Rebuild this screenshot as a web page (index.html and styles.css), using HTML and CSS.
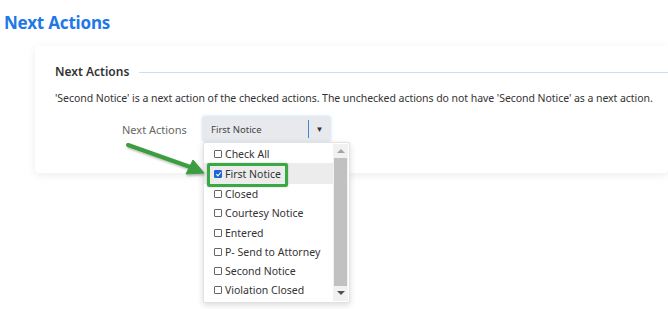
FILE: index.html
```html
<!DOCTYPE html>
<html lang="en">
<head>
    <meta charset="UTF-8">
    <title>Next Actions</title>
    <link rel="stylesheet" href="styles.css">
</head>
<body>
    <h1 class="page-title">Next Actions</h1>

    <div class="card">
        <div class="legend">
            <span>Next Actions</span>
            <div class="legend-line"></div>
        </div>
        <p class="note">'Second Notice' is a next action of the checked actions. The unchecked actions do not have 'Second Notice' as a next action.</p>

        <div class="field">
            <label class="field-label">Next Actions</label>
            <div class="select-wrap">
                <div class="select">
                    <span class="select-text">First Notice</span>
                    <span class="select-arrow">&#9660;</span>
                </div>
                <div class="dropdown">
                    <ul class="options">
                        <li><span class="box"></span>Check All</li>
                        <li class="hover"><span class="box checked"></span>First Notice</li>
                        <li><span class="box"></span>Closed</li>
                        <li><span class="box"></span>Courtesy Notice</li>
                        <li><span class="box"></span>Entered</li>
                        <li><span class="box"></span>P- Send to Attorney</li>
                        <li><span class="box"></span>Second Notice</li>
                        <li><span class="box"></span>Violation Closed</li>
                    </ul>
                    <div class="scrollbar">
                        <span class="sb-up"></span>
                        <span class="sb-thumb"></span>
                        <span class="sb-down"></span>
                    </div>
                    <div class="highlight"></div>
                </div>
            </div>
        </div>
    </div>

    <!-- annotation arrow -->
    <svg class="arrow" width="90" height="40" viewBox="0 0 90 40">
        <defs>
            <filter id="sh" x="-20%" y="-50%" width="140%" height="200%">
                <feDropShadow dx="1" dy="1.5" stdDeviation="1" flood-color="#000" flood-opacity="0.3"/>
            </filter>
        </defs>
        <g filter="url(#sh)" fill="#3a9d3f" stroke="#3a9d3f">
            <line x1="3" y1="4" x2="68" y2="27" stroke-width="4" stroke-linecap="round"/>
            <polygon points="79,32 61,33 68,19" stroke-width="1" stroke-linejoin="round"/>
        </g>
    </svg>
</body>
</html>
```

FILE: styles.css
```css
* {
  box-sizing: border-box;
}

body {
  margin: 0;
  background-color: #fff;
  font-family: "Noto Sans", "Open Sans", sans-serif;
  color: #333;
  position: relative;
  height: 309px;
  overflow: hidden;
}

.page-title {
  margin: 0;
  padding: 10px 4px 0;
  font-size: 17px;
  font-weight: bold;
  color: #1e78e8;
  line-height: 26px;
  letter-spacing: -0.2px;
}

.card {
  margin: 10px 0 0 35px;
  padding: 16px 0 20px 20px;
  background: #fff;
  border-radius: 4px;
  box-shadow: 0 2px 10px rgba(0, 0, 0, 0.08);
  height: 127px;
}

.legend {
  display: flex;
  align-items: center;
  gap: 10px;
  font-size: 12px;
  font-weight: 600;
  color: #333;
  line-height: 20px;
}

.legend-line {
  flex: 1;
  height: 1px;
  background: #cddff5;
}

.note {
  margin: 8px 0 0;
  font-size: 10.5px;
  line-height: 16px;
  color: #333;
  letter-spacing: -0.05px;
}

.field {
  display: flex;
  align-items: center;
  margin-top: 11px;
}

.field-label {
  flex-shrink: 0;
  width: 148px;
  padding-left: 67px;
  font-size: 11px;
  color: #666;
  white-space: nowrap;
}

.select-wrap {
  position: relative;
}

.select {
  display: flex;
  align-items: center;
  width: 127px;
  height: 24px;
  background: #e7e9ec;
  border-radius: 2px;
  box-shadow: 0 0 3px 1px rgba(120, 170, 230, 0.35);
}

.select-text {
  flex: 1;
  padding-left: 8px;
  font-size: 9.5px;
  color: #444;
}

.select-arrow {
  width: 22px;
  height: 18px;
  border-left: 1px solid #3f86d8;
  font-size: 8px;
  line-height: 18px;
  text-align: center;
  color: #333;
}

.dropdown {
  position: absolute;
  top: 25px;
  left: 0;
  width: 147px;
  height: 161px;
  background: #fff;
  border: 1px solid #e2e2e2;
  border-radius: 2px;
  box-shadow: 0 2px 6px rgba(0, 0, 0, 0.15);
  display: flex;
  z-index: 2;
}

.options {
  list-style: none;
  margin: 0;
  padding: 1px 0 0;
  flex: 1;
}

.options li {
  display: flex;
  align-items: center;
  height: 19.3px;
  padding-left: 10px;
  font-size: 10.5px;
  color: #333;
  white-space: nowrap;
}

.options li.hover {
  background: #ececec;
  height: 21px;
}

.box {
  width: 8px;
  height: 8px;
  margin-right: 3px;
  border: 1px solid #666;
  border-radius: 1px;
  background: #fff;
}

.box.checked {
  background: #1a66d6;
  border-color: #1a66d6;
  position: relative;
}

.box.checked:after {
  content: "";
  position: absolute;
  left: 1.5px;
  top: 0;
  width: 2px;
  height: 4px;
  border: solid #fff;
  border-width: 0 1.5px 1.5px 0;
  transform: rotate(40deg);
}

.scrollbar {
  width: 15px;
  margin: 1px 1px 1px 0;
  background: #f1f1f1;
  display: flex;
  flex-direction: column;
  align-items: center;
}

.sb-up,
.sb-down {
  width: 0;
  height: 0;
  border-left: 4px solid transparent;
  border-right: 4px solid transparent;
}

.sb-up {
  margin-top: 5px;
  border-bottom: 4px solid #a3a3a3;
}

.sb-down {
  margin-bottom: 6px;
  border-top: 4px solid #505050;
}

.sb-thumb {
  width: 13px;
  flex: 1;
  margin: 5px 0 5px;
  background: #c1c1c1;
}

.highlight {
  position: absolute;
  left: 3px;
  top: 20px;
  width: 81px;
  height: 24px;
  border: 3px solid #3aa843;
  border-radius: 2px;
  box-shadow: 0 0 2px rgba(0, 0, 0, 0.25);
}

.arrow {
  position: absolute;
  left: 125px;
  top: 141px;
  z-index: 3;
}
```
